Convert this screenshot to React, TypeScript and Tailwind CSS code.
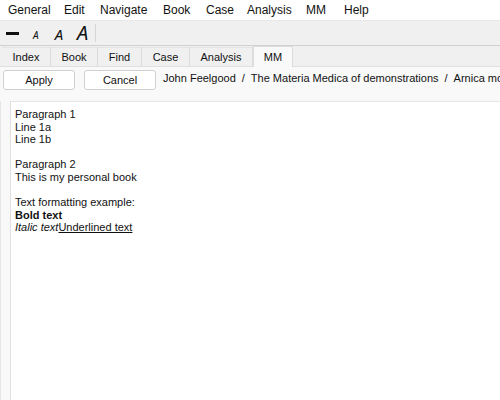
import React from "react";

const menu = [
  { label: "General", w: 56 },
  { label: "Edit", w: 36 },
  { label: "Navigate", w: 63 },
  { label: "Book", w: 43 },
  { label: "Case", w: 41 },
  { label: "Analysis", w: 59 },
  { label: "MM", w: 38 },
  { label: "Help", w: 40 },
];
const tabs = [
  { label: "Index", w: 49 },
  { label: "Book", w: 47 },
  { label: "Find", w: 44 },
  { label: "Case", w: 48 },
  { label: "Analysis", w: 63 },
];

export default function App() {
  return (
    <div
      className="w-[500px] h-[400px] overflow-hidden flex flex-col bg-[#f9f9f9] text-[#111]"
      style={{ fontFamily: '"Liberation Sans", Arial, sans-serif' }}
    >
      {/* menu bar */}
      <div className="h-[21px] bg-white flex items-center border-b border-[#e8e8e8] text-[12px] shrink-0">
        <div className="flex pl-[8px]">
          {menu.map((m) => (
            <span key={m.label} style={{ width: m.w }} className="leading-none shrink-0">
              {m.label}
            </span>
          ))}
        </div>
      </div>
      {/* toolbar */}
      <div className="h-[25px] bg-[#f0f0f0] flex items-center border-b border-[#d0d0d0] shrink-0">
        <div className="w-[13px] h-[3px] bg-[#111] ml-[6px] shrink-0" />
        <span className="ml-[14px] text-[10px] italic leading-none mt-[4px]" style={{ fontFamily: '"Noto Sans", sans-serif' }}>A</span>
        <span className="ml-[16px] text-[15px] italic leading-none mt-[2px]" style={{ fontFamily: '"Noto Sans", sans-serif' }}>A</span>
        <span className="ml-[14px] text-[20px] italic leading-none" style={{ fontFamily: '"Noto Sans", sans-serif' }}>A</span>
        <div className="ml-[7px] w-px h-[18px] bg-[#d6d6d6]" />
      </div>
      {/* tabs */}
      <div className="h-[21px] bg-[#f0f0f0] flex items-end pl-[2px] shrink-0 border-b border-[#e0e0e0] text-[11px]">
        {tabs.map((t) => (
          <div
            key={t.label}
            style={{ width: t.w }}
            className="h-[19px] shrink-0 flex items-center justify-center border-r border-[#dcdcdc] border-t border-t-[#e4e4e4] bg-[#f0f0f0]"
          >
            {t.label}
          </div>
        ))}
        <div className="w-[40px] h-[21px] shrink-0 flex items-center justify-center bg-[#f9f9f9] border-x border-t border-[#dcdcdc] -mb-px">
          MM
        </div>
      </div>
      {/* button row */}
      <div className="h-[34px] flex items-start pt-[3px] shrink-0 text-[11px] whitespace-nowrap overflow-hidden">
        <button className="shrink-0 ml-[3px] w-[72px] h-[20px] bg-white border border-[#d0d0d0] rounded-[3px] flex items-center justify-center">
          Apply
        </button>
        <button className="shrink-0 ml-[9px] w-[72px] h-[20px] bg-white border border-[#d0d0d0] rounded-[3px] flex items-center justify-center">
          Cancel
        </button>
        <span className="ml-[7px] leading-none mt-[3px] flex shrink-0">
          <span>John Feelgood</span>
          <span className="mx-[6px]">/</span>
          <span>The Materia Medica of demonstrations</span>
          <span className="mx-[6px]">/</span>
          <span>Arnica montana</span>
        </span>
      </div>
      {/* content */}
      <div className="flex-1 flex">
        <div className="w-[11px] shrink-0 border-l border-[#e6e6e6] border-r border-r-[#e0e0e0] bg-[#f8f8f8]" />
        <div className="flex-1 bg-white border-t border-[#e6e6e6] pt-[6px] pl-[4px] text-[11px] leading-[12.6px]">
          <div>Paragraph 1</div>
          <div>Line 1a</div>
          <div>Line 1b</div>
          <div>&nbsp;</div>
          <div>Paragraph 2</div>
          <div>This is my personal book</div>
          <div>&nbsp;</div>
          <div>Text formatting example:</div>
          <div className="font-bold">Bold text</div>
          <div>
            <span className="italic">Italic text</span>
            <span className="underline">Underlined text</span>
          </div>
        </div>
      </div>
    </div>
  );
}
